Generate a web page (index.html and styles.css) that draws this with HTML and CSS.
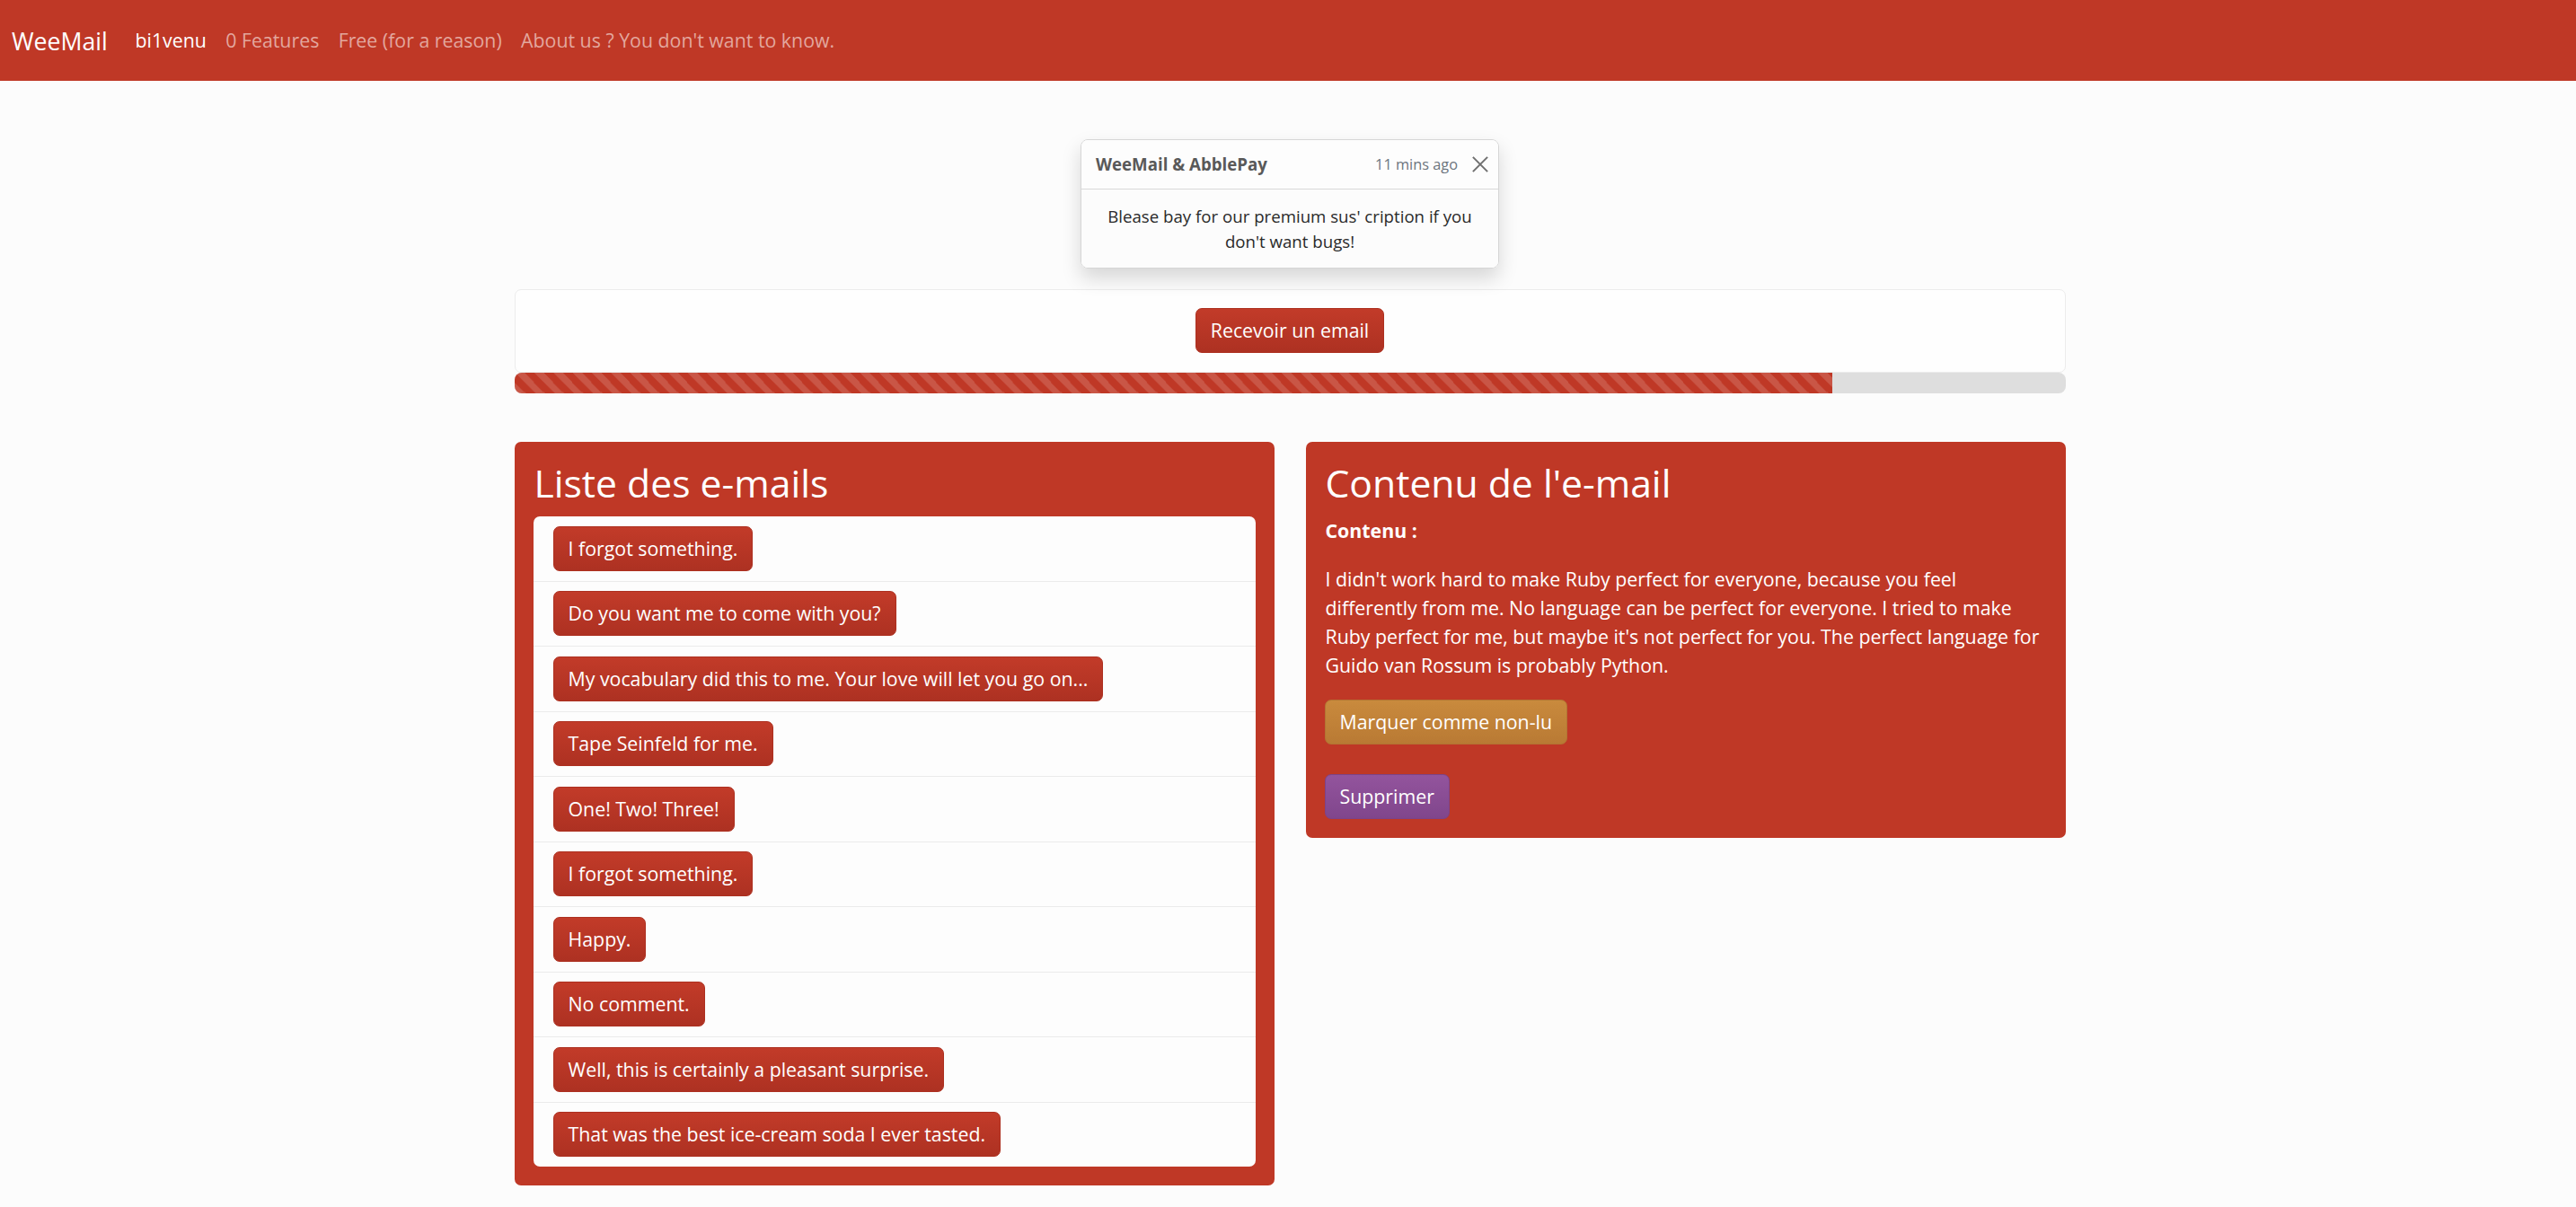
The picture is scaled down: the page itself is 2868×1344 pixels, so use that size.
FILE: index.html
```html
<!DOCTYPE html>
<html lang="fr">
<head>
<meta charset="utf-8">
<title>WeeMail</title>
<link rel="stylesheet" href="styles.css">
</head>
<body>
<nav class="navbar">
  <a class="brand" href="#">WeeMail</a>
  <ul class="nav">
    <li><a class="nav-link active" href="#">bi1venu</a></li>
    <li><a class="nav-link" href="#">0 Features</a></li>
    <li><a class="nav-link" href="#">Free (for a reason)</a></li>
    <li><a class="nav-link" href="#">About us ? You don't want to know.</a></li>
  </ul>
</nav>

<main class="container">
  <div class="toast-wrap">
    <div class="toast">
      <div class="toast-header">
        <strong class="toast-title">WeeMail &amp; AbblePay</strong>
        <small class="toast-time">11 mins ago</small>
        <button class="btn-close" aria-label="Close">
          <svg viewBox="0 0 16 16" width="20" height="20"><path d="M1.5 1.5L14.5 14.5M14.5 1.5L1.5 14.5" stroke="#6f6f6f" stroke-width="1.6" fill="none"/></svg>
        </button>
      </div>
      <div class="toast-body">Blease bay for our premium sus' cription if you don't want bugs!</div>
    </div>
  </div>

  <section class="receive-card">
    <button class="btn btn-red">Recevoir un email</button>
  </section>
  <div class="progress">
    <div class="progress-bar" style="width:85%"></div>
  </div>

  <div class="panels">
    <section class="panel">
      <h2 class="panel-title">Liste des e-mails</h2>
      <ul class="list-group">
        <li class="list-item"><button class="btn btn-red">I forgot something.</button></li>
        <li class="list-item"><button class="btn btn-red">Do you want me to come with you?</button></li>
        <li class="list-item"><button class="btn btn-red">My vocabulary did this to me. Your love will let you go on...</button></li>
        <li class="list-item"><button class="btn btn-red">Tape Seinfeld for me.</button></li>
        <li class="list-item"><button class="btn btn-red">One! Two! Three!</button></li>
        <li class="list-item"><button class="btn btn-red">I forgot something.</button></li>
        <li class="list-item"><button class="btn btn-red">Happy.</button></li>
        <li class="list-item"><button class="btn btn-red">No comment.</button></li>
        <li class="list-item"><button class="btn btn-red">Well, this is certainly a pleasant surprise.</button></li>
        <li class="list-item"><button class="btn btn-red">That was the best ice-cream soda I ever tasted.</button></li>
      </ul>
    </section>

    <section class="panel">
      <h2 class="panel-title">Contenu de l'e-mail</h2>
      <p class="content-label">Contenu :</p>
      <p class="content-text">I didn't work hard to make Ruby perfect for everyone, because you feel differently from me. No language can be perfect for everyone. I tried to make Ruby perfect for me, but maybe it's not perfect for you. The perfect language for Guido van Rossum is probably Python.</p>
      <div class="actions">
        <button class="btn btn-orange">Marquer comme non-lu</button>
        <button class="btn btn-purple">Supprimer</button>
      </div>
    </section>
  </div>
</main>
</body>
</html>
```

FILE: styles.css
```css
* {
  box-sizing: border-box;
}

html, body {
  margin: 0;
  padding: 0;
}

body {
  background: #fcfcfc;
  font-family: "Open Sans", "Noto Sans", sans-serif;
  font-size: 21.333px;
  line-height: 32px;
  color: #212529;
}

/* NAVBAR */
.navbar {
  height: 90px;
  background: #bf3826;
  display: flex;
  align-items: center;
  padding: 0 13px;
}

.brand {
  font-size: 26.667px;
  line-height: 40px;
  color: #fff;
  text-decoration: none;
  margin-right: 20px;
  padding-top: 2px;
}

.nav {
  list-style: none;
  margin: 0;
  padding: 0;
  display: flex;
}

.nav-link {
  display: block;
  padding: 0 10.667px;
  font-size: 21.333px;
  line-height: 32px;
  color: #e3a79e;
  text-decoration: none;
}

.nav-link.active {
  color: #fff;
}

/* MAIN */
.container {
  width: 1727px;
  margin: 0 auto;
  padding-bottom: 22px;
  position: relative;
  left: 2px;
}

.toast-wrap {
  display: flex;
  justify-content: center;
  padding-top: 65px;
  margin-bottom: 23px;
}

.toast {
  width: 466px;
  font-size: 18.667px;
  line-height: 28px;
  background: rgba(255, 255, 255, 0.85);
  border: 1px solid #d6d6d6;
  border-radius: 8px;
  box-shadow: 0 10.5px 21px rgba(0, 0, 0, 0.15);
  overflow: hidden;
}

.toast-header {
  height: 55px;
  display: flex;
  align-items: center;
  padding: 0 10px 0 16px;
  border-bottom: 1px solid #d9d9d9;
  background: #fdfdfd;
}

.toast-title {
  color: #595959;
  font-weight: 700;
  margin-right: auto;
}

.toast-time {
  font-size: 16.333px;
  color: #6c757d;
  margin-right: 15px;
}

.btn-close {
  border: 0;
  background: transparent;
  padding: 0;
  width: 20px;
  height: 20px;
  display: flex;
  cursor: pointer;
}

.toast-body {
  padding: 15.5px 16px;
  text-align: center;
  color: #2a2a2a;
  background: #fcfcfc;
}

/* RECEIVE CARD */
.receive-card {
  background: #fefefe;
  border: 1px solid #ececec;
  border-radius: 7px;
  padding: 20px 0 21px;
  text-align: center;
}

.progress {
  height: 23px;
  background: #dedede;
  border-radius: 8px;
  overflow: hidden;
  display: flex;
}

.progress-bar {
  height: 100%;
  background-color: #bf3826;
  background-image: linear-gradient(45deg,
    rgba(255, 255, 255, 0.15) 25%, transparent 25%,
    transparent 50%, rgba(255, 255, 255, 0.15) 50%,
    rgba(255, 255, 255, 0.15) 75%, transparent 75%, transparent);
  background-size: 21.333px 21.333px;
}

/* BUTTONS */
.btn {
  font-family: inherit;
  font-size: 21.333px;
  line-height: 32px;
  padding: 8px 16px;
  border: 1px solid transparent;
  border-radius: 7px;
  color: #fff;
  cursor: pointer;
  display: inline-block;
  text-align: center;
}

.btn-red {
  background: linear-gradient(180deg, #c23b29 0%, #ad3122 100%);
  border-color: #ad3020;
}

.btn-orange {
  background: linear-gradient(180deg, #c98a3d 0%, #b97a34 100%);
  border-color: #b37433;
}

.btn-purple {
  background: linear-gradient(180deg, #93549d 0%, #80468c 100%);
  border-color: #7c4389;
}

/* PANELS */
.panels {
  margin-top: 54px;
  display: grid;
  grid-template-columns: 1fr 1fr;
  column-gap: 35px;
  align-items: start;
}

.panel {
  background: #bf3826;
  border-radius: 7px;
  padding: 20px 21px 21px;
  color: #fff;
}

.panel-title {
  font-size: 42.667px;
  font-weight: 400;
  line-height: 51px;
  margin: 0 0 12px 1px;
}

.list-group {
  list-style: none;
  margin: 0;
  padding: 0;
  background: #fdfdfd;
  border-radius: 7px;
  overflow: hidden;
}

.list-item {
  padding: 10.75px 22px;
}

.list-item + .list-item {
  border-top: 1px solid #ebebeb;
}

.content-label {
  font-weight: 700;
  line-height: 32px;
  margin: 0 0 22px 1px;
}

.content-text {
  line-height: 32px;
  margin: 0 0 22px 1px;
}

.actions {
  display: flex;
  flex-direction: column;
  align-items: flex-start;
  gap: 33px;
}
```
